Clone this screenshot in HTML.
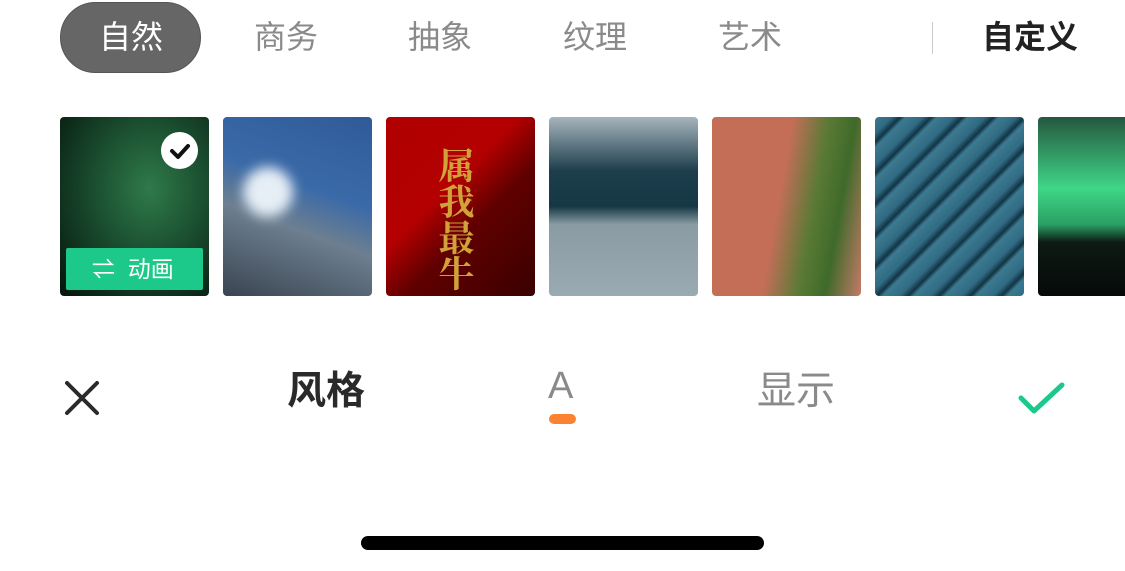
<!DOCTYPE html>
<html><head><meta charset="utf-8"><style>
*{margin:0;padding:0;box-sizing:border-box}
body{width:1125px;height:571px;background:#fff;position:relative;overflow:hidden;font-family:"Liberation Sans","Noto Sans CJK SC",sans-serif}
.t{position:absolute;top:16px;font-size:32px;color:#8a8a8a;line-height:42px;white-space:nowrap}
.pill{position:absolute;left:60px;top:2px;width:141px;height:71px;border-radius:36px;background:#666;border:1px solid #555}
.tile{position:absolute;top:117px;width:149px;height:179px;border-radius:4px;overflow:hidden}
</style></head><body>
<div class="pill"></div>
<div class="t" style="left:99px;color:#fff">自然</div>
<div class="t" style="left:254px">商务</div>
<div class="t" style="left:408px">抽象</div>
<div class="t" style="left:563px">纹理</div>
<div class="t" style="left:718px">艺术</div>
<div style="position:absolute;left:932px;top:22px;width:1px;height:32px;background:#ccc"></div>
<div class="t" style="left:982px;color:#222;font-weight:bold">自定义</div>

<div class="tile" style="left:60px;background:radial-gradient(ellipse at 60% 40%,#2f7a4a 0%,#1c5232 40%,#0c2818 80%,#06140c 100%)">
 <div style="position:absolute;left:101px;top:15px;width:37px;height:37px;border-radius:50%;background:#fff"></div>
 <svg style="position:absolute;left:101px;top:15px" width="37" height="37"><path d="M11 19l6 6 10-11" stroke="#111" stroke-width="4" fill="none" stroke-linecap="round" stroke-linejoin="round"/></svg>
 <div style="position:absolute;left:6px;top:131px;width:137px;height:42px;background:#1dc98a;border-radius:2px;color:#fff;font-size:23px;line-height:42px;padding-left:26px">⇌&nbsp;&nbsp;动画</div>
</div>
<div class="tile" style="left:223px;background:linear-gradient(200deg,#2f5a98 0%,#3b6aa8 40%,#6d7f90 60%,#3a4450 100%)">
 <div style="position:absolute;left:20px;top:50px;width:50px;height:50px;border-radius:50%;background:#e6eef6;filter:blur(6px)"></div>
</div>
<div class="tile" style="left:386px;background:linear-gradient(135deg,#b00000 0%,#b40000 40%,#600000 60%,#3a0000 100%)">
 <div style="position:absolute;left:50px;top:30px;font-size:36px;line-height:40px;color:#d1a23a;writing-mode:vertical-rl;font-family:'Noto Serif CJK SC',serif;font-weight:bold">属我最牛</div>
</div>
<div class="tile" style="left:549px;background:linear-gradient(180deg,#a6b4bd 0%,#1d3e4c 30%,#153845 50%,#8a9ba4 60%,#9aaab2 100%)"></div>
<div class="tile" style="left:712px;background:linear-gradient(100deg,#c46e58 0%,#c46e58 45%,#5a7a35 65%,#3f6a2a 80%,#c47a68 100%)"></div>
<div class="tile" style="left:875px;background:repeating-linear-gradient(135deg,#3c7a92 0px,#2f6a82 12px,#123443 18px,#3c7a92 22px)"></div>
<div class="tile" style="left:1038px;width:100px;background:linear-gradient(180deg,#25573e 0%,#3fd687 40%,#2aa064 60%,#0e1a14 70%,#050a08 100%)"></div>

<svg style="position:absolute;left:64px;top:380px" width="36" height="36"><path d="M3 3l30 30M33 3L3 33" stroke="#2a2a2a" stroke-width="4" stroke-linecap="round"/></svg>
<div style="position:absolute;left:287px;top:367px;font-size:39px;font-weight:bold;color:#2a2a2a;line-height:50px">风格</div>
<div style="position:absolute;left:548px;top:362px;font-size:38px;color:#8a8a8a;line-height:48px">A</div>
<div style="position:absolute;left:549px;top:414px;width:27px;height:10px;border-radius:5px;background:#fa8232"></div>
<div style="position:absolute;left:757px;top:367px;font-size:39px;color:#8a8a8a;line-height:50px">显示</div>
<svg style="position:absolute;left:1016px;top:380px" width="52" height="36"><path d="M5 18l13 13L46 5" stroke="#1dc98a" stroke-width="5" fill="none" stroke-linecap="round" stroke-linejoin="round"/></svg>
<div style="position:absolute;left:361px;top:536px;width:403px;height:14px;border-radius:7px;background:#000"></div>
</body></html>
